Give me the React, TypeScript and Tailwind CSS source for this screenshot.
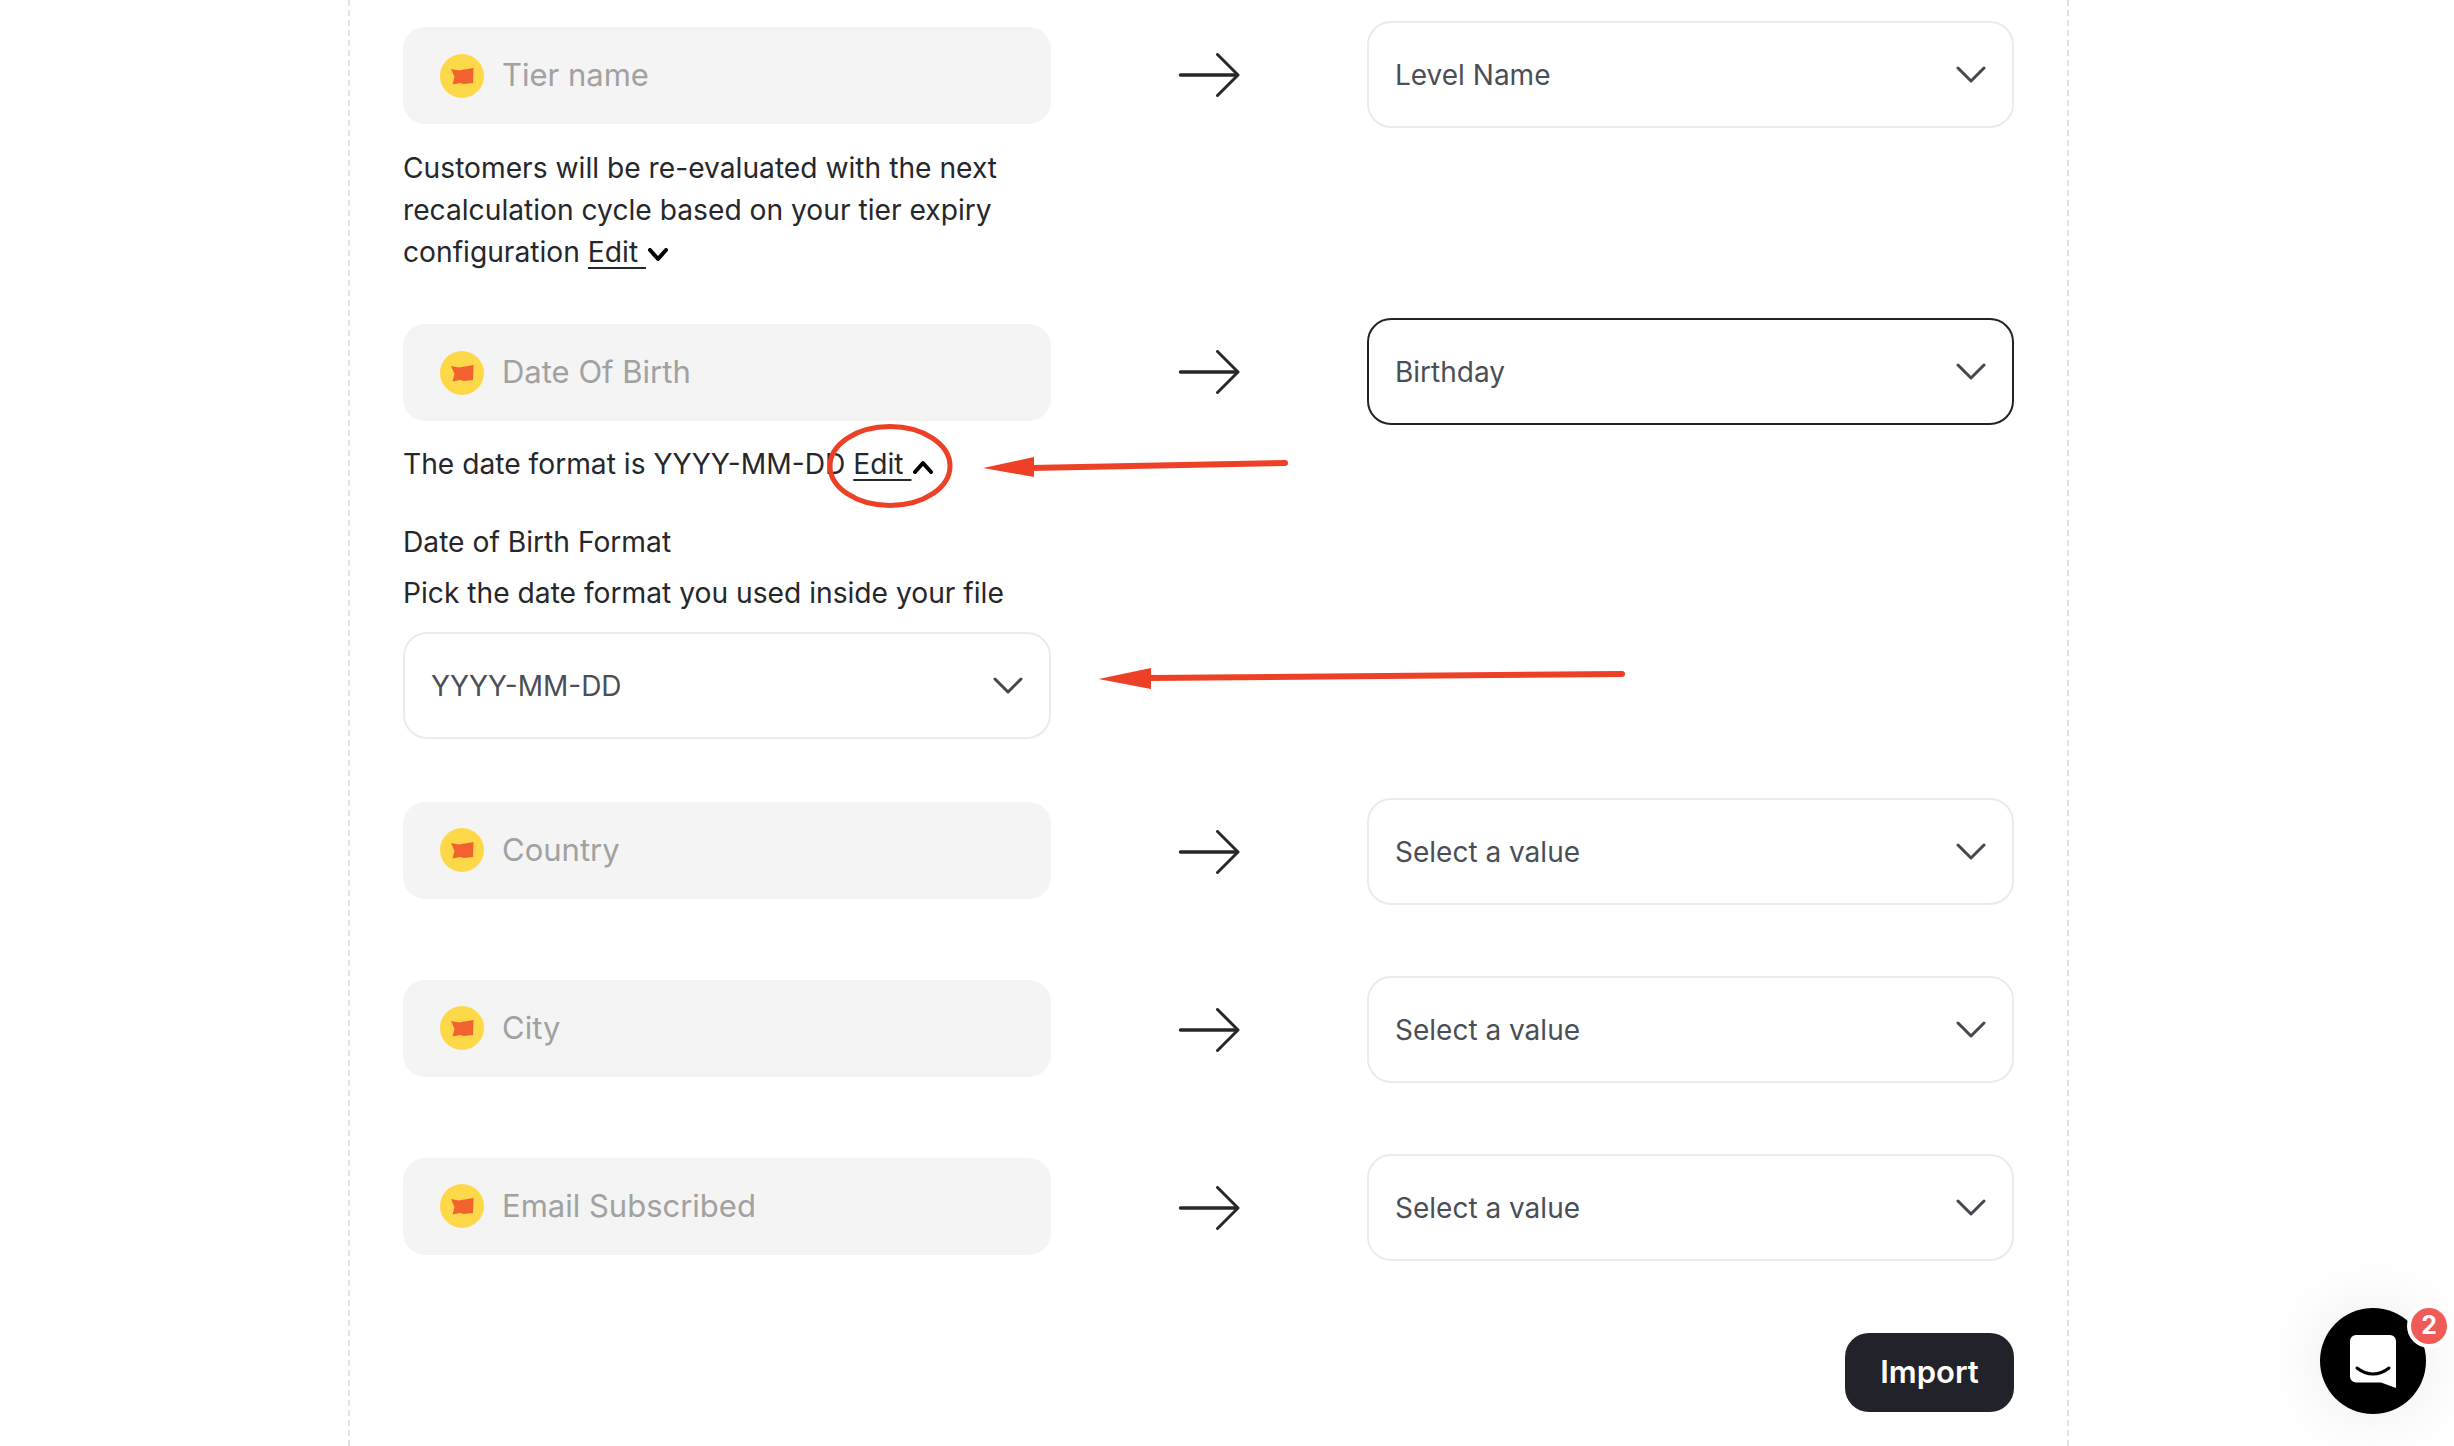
import type { ReactNode } from "react";

const INTER = "font-['Inter','Noto_Sans',sans-serif]";

function FlagBadge() {
  return (
    <svg width="44" height="44" viewBox="0 0 44 44" className="shrink-0">
      <circle cx="22" cy="22" r="22" fill="#fdd848" />
      <path
        d="M11 15 L19 16.5 L33.5 14 L33 29 L24 30 L20 29 L12.5 30.5 L14.5 23 Z"
        fill="#f1622f"
      />
    </svg>
  );
}

function ArrowRight() {
  return (
    <svg width="62" height="44" viewBox="0 0 62 44" fill="none" stroke="#27272a" strokeLinecap="round" strokeLinejoin="round">
      <path d="M2.5 22 H59" strokeWidth="3.5" />
      <path d="M39.5 1.5 L60 22 L39.5 42.5" strokeWidth="3" />
    </svg>
  );
}

function SelectChevron() {
  return (
    <svg width="30" height="17" viewBox="0 0 30 17" fill="none" stroke="#444750" strokeWidth="3" strokeLinecap="round" strokeLinejoin="round">
      <path d="M2 2 L15 15 L28 2" />
    </svg>
  );
}

function EditLink({ open }: { open?: boolean }) {
  return (
    <span className="inline-flex items-center">
      <span className="underline underline-offset-[5px] decoration-2 whitespace-pre">Edit </span>
      <svg width="22" height="14" viewBox="0 0 22 14" fill="none" stroke="#000" strokeWidth="4" strokeLinecap="round" strokeLinejoin="round" className="ml-[1px] mt-[5px]">
        <path d={open ? "M3 12 L11 3 L19 12" : "M3 2 L11 11 L19 2"} />
      </svg>
    </span>
  );
}

function SelectBox({ value, active, w }: { value: string; active?: boolean; w: string }) {
  return (
    <div
      className={`${w} flex h-[107px] items-center justify-between rounded-[24px] border-2 bg-white pl-[26px] pr-[26px] text-[28px] text-[#4a4f57] ${
        active ? "border-[#22232a]" : "border-[#ebebeb]"
      }`}
    >
      <span>{value}</span>
      <SelectChevron />
    </div>
  );
}

function SourceField({ label, lifted }: { label: string; lifted?: boolean }) {
  return (
    <div
      className={`flex h-[97px] w-[648px] items-center gap-[18px] rounded-[22px] bg-[#f4f4f4] pl-[37px] text-[31px] text-[#a1a1a1] ${
        lifted ? "-mt-[3px]" : "mt-[2px]"
      }`}
    >
      <FlagBadge />
      <span>{label}</span>
    </div>
  );
}

function MappingRow({
  label,
  target,
  active,
  lifted,
  className,
}: {
  label: string;
  target: string;
  active?: boolean;
  lifted?: boolean;
  className?: string;
}) {
  return (
    <div className={`flex items-center ${className ?? ""}`}>
      <SourceField label={label} lifted={lifted} />
      <div className="ml-[127px] mr-[127px] flex w-[62px] justify-center">
        <ArrowRight />
      </div>
      <SelectBox value={target} active={active} w="w-[647px]" />
    </div>
  );
}

function Note({ children, className }: { children: ReactNode; className?: string }) {
  return <div className={`w-[648px] text-[28.2px] leading-[42px] text-[#26272b] ${className ?? ""}`}>{children}</div>;
}

export default function App() {
  return (
    <div className={`relative h-screen w-full overflow-hidden bg-white ${INTER}`}>
      <div className="ml-[348px] h-full w-[1721px] border-x-2 border-dashed border-[#e2e2e2] pl-[53px] pt-[21px]">
        <MappingRow label="Tier name" target="Level Name" />
        <Note className="mt-[19px]">
          Customers will be re-evaluated with the next recalculation cycle based on your tier expiry configuration{" "}
          <EditLink />
        </Note>

        <MappingRow label="Date Of Birth" target="Birthday" active className="mt-[45px]" />
        <Note className="mt-[18px] whitespace-nowrap">
          The date format is YYYY-MM-DD <EditLink open />
        </Note>
        <Note className="mt-[36px]">Date of Birth Format</Note>
        <Note className="mt-[9px]">Pick the date format you used inside your file</Note>
        <div className="mt-[18px]">
          <SelectBox value="YYYY-MM-DD" w="w-[648px]" />
        </div>

        <MappingRow label="Country" target="Select a value" lifted className="mt-[59px]" />
        <MappingRow label="City" target="Select a value" lifted className="mt-[71px]" />
        <MappingRow label="Email Subscribed" target="Select a value" lifted className="mt-[71px]" />

        <div className="mt-[72px] flex w-[1611px] justify-end">
          <button className="flex h-[79px] w-[169px] items-center justify-center rounded-[24px] bg-[#22232a] text-[31px] font-semibold text-white">
            Import
          </button>
        </div>
      </div>

      {/* hand drawn annotations on top of the form */}
      <svg className="pointer-events-none absolute left-0 top-0" width="2454" height="1446" fill="none">
        <ellipse cx="890" cy="466" rx="60" ry="39.5" stroke="#ee4026" strokeWidth="5" />
        <path d="M1030 468 L1285 463" stroke="#ee4026" strokeWidth="6" strokeLinecap="round" />
        <path d="M983 468 L1034 457 L1034 477 Z" fill="#ee4026" />
        <path d="M1148 678 L1622 674" stroke="#ee4026" strokeWidth="6" strokeLinecap="round" />
        <path d="M1098.5 679 L1151 668 L1151 689 Z" fill="#ee4026" />
      </svg>

      {/* chat launcher */}
      <div className="absolute left-[2320px] top-[1308px] flex h-[106px] w-[106px] items-center justify-center rounded-full bg-black shadow-[0_0_70px_rgba(0,0,0,0.09)]">
        <svg width="46" height="53" viewBox="0 0 46 53" className="mt-[1px]">
          <path d="M6 0 H40 A6 6 0 0 1 46 6 V53 L31 47.5 H6 A6 6 0 0 1 0 41.5 V6 A6 6 0 0 1 6 0 Z" fill="#fff" />
          <path d="M7 33 C17 41 29 41 39 33" fill="none" stroke="#000" strokeWidth="3" strokeLinecap="round" />
        </svg>
        <span className="absolute left-[87px] top-[-4px] flex h-[44px] w-[44px] items-center justify-center rounded-full border-[4px] border-white bg-[#f05b57] text-[25px] font-bold text-white">
          2
        </span>
      </div>
    </div>
  );
}
